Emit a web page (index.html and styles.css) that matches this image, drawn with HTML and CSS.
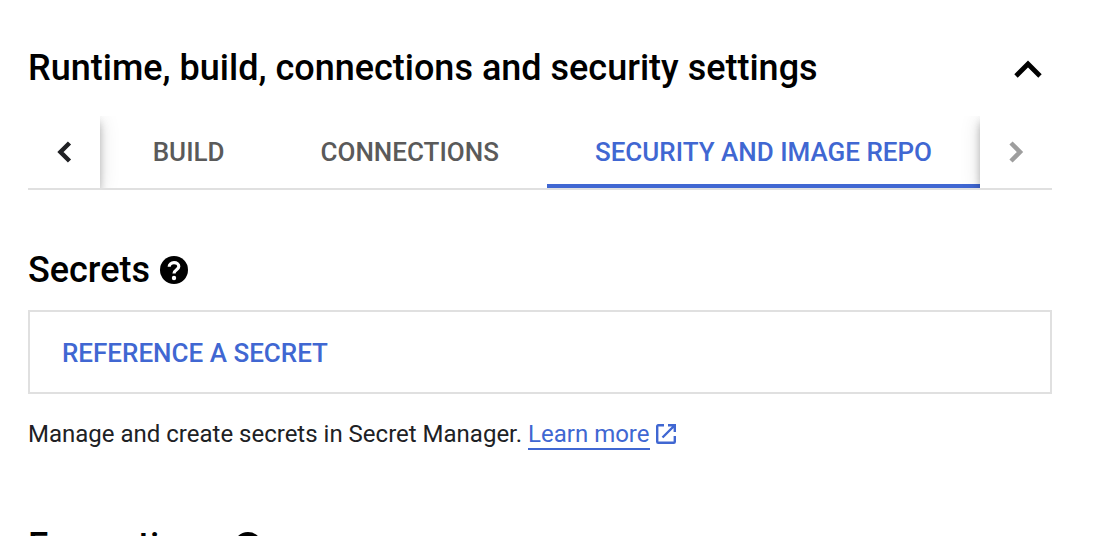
FILE: index.html
```html
<!DOCTYPE html>
<html lang="en">
<head>
<meta charset="utf-8">
<title>Runtime settings</title>
<link rel="stylesheet" href="styles.css">
</head>
<body>
<main class="panel">
  <header class="panel-header">
    <h1 class="heading">Runtime, build, connections and security settings</h1>
    <button class="icon-button collapse" aria-label="Collapse">
      <svg class="chevron" width="48" height="48" viewBox="0 0 48 48"><path d="M12 32l12-12 12 12" stroke-width="4.800"/></svg>
    </button>
  </header>
  <nav class="tabs" aria-label="Settings">
    <button class="icon-button pager" aria-label="Previous tabs">
      <svg class="chevron" width="36" height="36" viewBox="0 0 36 36"><path d="M23.500 9l-9 9 9 9" stroke-width="4.500"/></svg>
    </button>
    <div class="tab-list" role="tablist">
      <button class="tab" role="tab">BUILD</button>
      <button class="tab" role="tab">CONNECTIONS</button>
      <button class="tab tab-active" role="tab" aria-selected="true">SECURITY AND IMAGE REPO</button>
    </div>
    <button class="icon-button pager pager-next" aria-label="Next tabs">
      <svg class="chevron" width="36" height="36" viewBox="0 0 36 36"><path d="M13 9l9 9-9 9" stroke-width="4.500"/></svg>
    </button>
  </nav>
  <section class="section">
    <h2 class="heading section-title">Secrets
      <button class="icon-button" aria-label="Help on secrets">
        <svg width="28" height="28" viewBox="0 0 28 28"><circle cx="14" cy="14" r="14"/><path class="mark" d="M9.200 10.800c0-2.400 2-4.100 4.800-4.100s4.800 1.700 4.800 3.900c0 3.200-4.800 3.200-4.800 7"/><circle class="dot" cx="14" cy="22" r="2.200"/></svg>
      </button>
    </h2>
    <div class="secret-box"><button class="reference">REFERENCE A SECRET</button></div>
    <p class="hint">Manage and create secrets in Secret Manager. <a class="learn" href="#">Learn more</a><svg class="external" width="20" height="20" viewBox="0 0 20 20"><path d="M8 1.200H2.200a1 1 0 0 0-1 1v15.600a1 1 0 0 0 1 1h15.600a1 1 0 0 0 1-1V12M12 1.200h6.800V8M18.500 1.500L6.500 13.500"/></svg></p>
  </section>
  <section class="section">
    <h2 class="heading section-title title-spaced">Encryption
      <button class="icon-button" aria-label="Help on encryption">
        <svg width="28" height="28" viewBox="0 0 28 28"><circle cx="14" cy="14" r="14"/><path class="mark" d="M9.200 10.800c0-2.400 2-4.100 4.800-4.100s4.800 1.700 4.800 3.900c0 3.200-4.800 3.200-4.800 7"/><circle class="dot" cx="14" cy="22" r="2.200"/></svg>
      </button>
    </h2>
  </section>
</main>
</body>
</html>
```
FILE: styles.css
```css
* { box-sizing: border-box; }
html { height: 100%; overflow: hidden; }
body { margin: 0; font-family: Roboto, sans-serif; color: #202124; background: #fff; }
button { font: inherit; border: 0; padding: 0; background: none; }
svg { display: block; fill: currentColor; }
.chevron { fill: none; stroke: currentColor; }
.mark { fill: none; stroke: #fff; stroke-width: 3.2; }
.dot { fill: #fff; }
.panel { padding: 44px 68px 0 28px; }
.panel-header { display: flex; justify-content: space-between; align-items: center; height: 48px; }
.heading { margin: 0; font-size: 36px; line-height: 48px; font-weight: 500; color: #000; }
.icon-button { display: flex; color: #000; }
.tabs { display: flex; height: 74px; margin-top: 24px; border-bottom: 2px solid #e0e0e0; overflow: hidden; }
.pager { position: relative; width: 72px; align-items: center; justify-content: center; flex: none; color: #202124; background: #fff; box-shadow: 0 4px 8px -2px rgba(0,0,0,.2), 0 8px 10px rgba(0,0,0,.14), 0 2px 20px rgba(0,0,0,.12); }
.pager-next { color: #9e9e9e; }
.tab-list { flex: 1; display: flex; justify-content: flex-end; overflow: hidden; }
.tab { font-size: 26px; line-height: 32px; font-weight: 500; color: #5a5a5a; white-space: nowrap; padding: 0 48px; }
.tab-active { color: #4067d2; box-shadow: inset 0 -4px #4067d2; }
.section { padding-top: 56px; }
.section-title { display: flex; align-items: center; gap: 10px; }
.title-spaced { gap: 34px; }
.secret-box { border: 2px solid #e0e0e0; margin-top: 16px; padding: 25px 32px 23px; }
.reference { display: block; font-size: 26px; line-height: 32px; font-weight: 500; color: #4067d2; }
.hint { margin: 24px 0 16px; font-size: 24px; line-height: 32px; }
.learn { color: #4067d2; text-decoration: none; border-bottom: 2px solid #4067d2; }
.external { display: inline-block; vertical-align: -2px; fill: none; stroke: #4067d2; stroke-width: 2.4; margin-left: 6px; }
```
